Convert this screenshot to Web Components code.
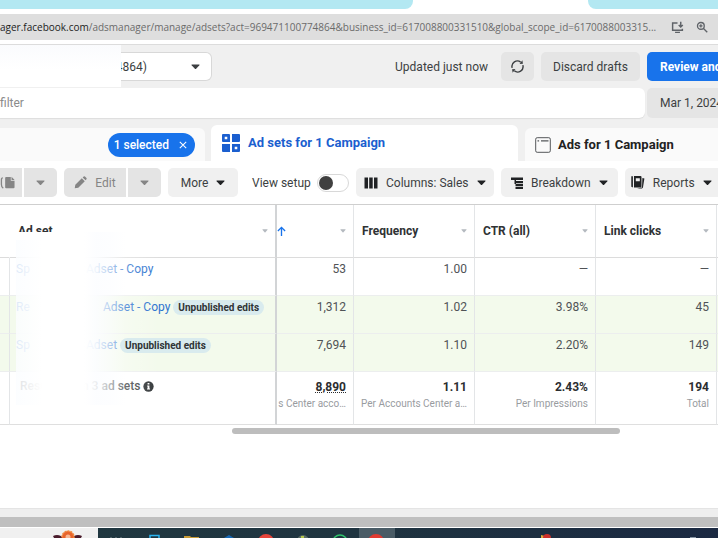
<!DOCTYPE html>
<html lang="en">
<head>
<meta charset="utf-8">
<title>Ads Manager</title>
<style>
  body {
    margin: 0;
    overflow: hidden;
    background: #ffffff;
    color: #3c3f42;
    font: 12px/16px Roboto, "Liberation Sans", sans-serif;
  }
</style>
</head>
<body>
<ads-page></ads-page>

<script>
const icons = {
  caret: ["0 0 10 6", `<path d="M1 .5h8q.8 0 .3.8L5.700 5.300q-.7.7-1.400 0L.7 1.300Q.2.5 1 .5z"/>`],
  refresh: ["0 0 16 16", `<g fill="none" stroke="currentColor" stroke-width="1.500"><path d="M2.300 9.500A5.800 5.800 0 0 1 11.500 3.400"/><path d="M13.700 6.500A5.800 5.800 0 0 1 4.500 12.600"/></g><path d="M10.200 5.300l3.600-.3-.6-3.600zM5.800 10.700l-3.600.3.600 3.600z"/>`],
  install: ["0 0 16 16", `<g fill="none" stroke="currentColor" stroke-width="1.800"><path d="M8 2.500H2v9h12V9.500"/><path d="M5 14h6M12 1v6M9.500 4.800L12 7.300l2.500-2.500"/></g>`],
  zoom: ["0 0 16 16", `<g fill="none" stroke="currentColor" stroke-width="1.800"><circle cx="6.500" cy="6.500" r="4.500"/><path d="M10 10l5 5M4.300 6.500h4.400M6.500 4.300v4.400"/></g>`],
  close: ["0 0 10 10", `<path d="M1 1l8 8M9 1L1 9" fill="none" stroke="currentColor" stroke-width="1.300"/>`],
  adsets: ["0 0 20 20", `<path fill-rule="evenodd" d="M2 1H8q1 0 1 1v7H2Q1 9 1 8V2Q1 1 2 1zM3.700 3.700v2.600h2.600V3.700zM11 1h7q1 0 1 1v6q0 1-1 1h-7zM1 11h8v8H2q-1 0-1-1zM11 11h8v7q0 1-1 1h-7zM13.700 13.700v2.600h2.600v-2.600z"/>`],
  ads: ["0 0 16 16", `<rect x=".7" y=".7" width="14.600" height="14.600" rx="1.500" fill="none" stroke="currentColor" stroke-width="1"/><path d="M2.500 3.200h1.600v1.400H2.500zM6 3.200h7.500v1.200H6z"/>`],
  copy: ["0 0 16 14", `<path d="M6.500 1h5v4h4v7q0 1-1 1h-8q-1 0-1-1V2q0-1 1-1zM12.300.8l3.300 3.400h-3.300z"/><path d="M3 2Q1.500 2 1.500 4v5q0 3 2 4" fill="none" stroke="currentColor" stroke-width="1.400"/>`],
  pencil: ["0 0 14 14", `<path d="M.8 13.200l.6-3.800 7-7 3.200 3.200-7 7zM9.300 1.500L10.500.6q.7-.5 1.300 0l1.600 1.600q.6.600 0 1.300l-.9 1.200z"/>`],
  columns: ["0 0 14 12", `<path d="M.5.5h3.500v11H.5zM5.200.5h3.500v11H5.200zM10 .5h3.500v11H10z"/>`],
  breakdown: ["0 0 12 12", `<path d="M0 .5h12v2.600H0zM3.500 4H12v2.200H3.500zM4.500 7H12v2H4.500zM4.500 9.800H12V12H4.500zM3.500 3h1.500v4H3.500z"/>`],
  reports: ["0 0 14 13", `<path fill-rule="evenodd" d="M3 0h6.500q1 0 1 1v9.500q0 1-1 1H3zM4.800 2.300v3h4v-3z"/><path d="M.3.300h1.600v11H1.300q-1 0-1-1zM11.400 2l2 .6-1.400 8.600q-.2 1-1.200 1.200H6l5-1z"/>`],
  sort: ["0 0 10 12", `<path d="M5 12V1.500M1 5.500l4-4 4 4" fill="none" stroke="currentColor" stroke-width="1.500"/>`],
  info: ["0 0 12 12", `<circle cx="6" cy="6" r="5.600"/><path fill="#fff" d="M5 2.300h2v1.500H5zM4.500 4.800H7v3.400h.7v1.200H4.400V8.200H5V6h-.5z"/>`]
};

class AdsIcon extends HTMLElement {
  constructor() {
    super();
    this.attachShadow({ mode: "open" });
  }

  connectedCallback() {
    const [box, shape] = icons[this.getAttribute("name")];
    const width = this.getAttribute("width") || 12;
    this.shadowRoot.innerHTML = `
      <style>
        :host { display: inline-flex; flex: none; }
        svg { display: block; width: ${width}px; fill: currentColor; }
      </style>
      <svg viewBox="${box}" aria-hidden="true">${shape}</svg>`;
  }
}
customElements.define("ads-icon", AdsIcon);

// Creates a custom element whose shadow root is cloned from fixed markup
function define(name, html) {
  const template = document.createElement("template");
  template.innerHTML = html;
  customElements.define(name, class extends HTMLElement {
    constructor() {
      super();
      this.attachShadow({ mode: "open" });
      this.shadowRoot.appendChild(template.content.cloneNode(true));
    }
  });
}

define("ads-button", `
  <style>
    :host { display: block; flex: none; }
    button {
      display: flex; align-items: center; justify-content: var(--justify, center); gap: 8px;
      box-sizing: border-box; width: 100%; height: var(--height, 29px); margin: 0;
      padding: 0 var(--pad, 10px);
      border: 0; border-radius: var(--radius, 5px);
      background: var(--bg, #f0f0f0); color: inherit;
      font: inherit; white-space: nowrap; overflow: hidden;
    }
  </style>
  <button type="button"><slot></slot></button>
`);

define("browser-chrome", `
  <style>
    :host { display: block; background: #fff; border-bottom: 1px solid #dcdcdc; padding-bottom: 4px; }
    .tabs { display: flex; justify-content: space-between; height: 9px; margin-bottom: 5px; }
    .tab { background: #b3e8f2; }
    .first { flex: 0 0 413px; border-bottom-right-radius: 8px; }
    .last { flex: 0 0 130px; border-bottom-left-radius: 8px; }
    .bar {
      display: flex; align-items: center; height: 26px; padding-right: 10px;
      background: #dedede; color: #5f6368;
    }
    .url {
      flex: 1; white-space: nowrap; overflow: hidden;
      font: 10px/16px "Open Sans", "Noto Sans", sans-serif; color: #6b6b6b;
    }
    b { font-weight: 400; color: #222; }
    .bar ads-icon + ads-icon { margin-left: 12px; }
  </style>
  <div class="tabs"><div class="tab first"></div><div class="tab last"></div></div>
  <div class="bar">
    <div class="url"><b>ager.facebook.com</b>/adsmanager/manage/adsets?act=969471100774864&amp;business_id=617008800331510&amp;global_scope_id=6170088003315...</div>
    <ads-icon name="install" width="13"></ads-icon>
    <ads-icon name="zoom" width="12"></ads-icon>
  </div>
`);

define("account-bar", `
  <style>
    :host { display: grid; gap: 7px; padding: 7px 0; background: #f0f0f0; }
    .row { display: flex; align-items: center; }
    .account { position: relative; flex: 0 0 212px; }
    select {
      display: block; appearance: none; box-sizing: border-box; width: 100%; height: 29px;
      padding: 0 64px 0 0; border: 1px solid #d8d8d8; border-left: 0;
      border-radius: 0 6px 6px 0; background: #fff;
      color: inherit; font: inherit; text-align: right; text-align-last: right;
    }
    .account ads-icon { position: absolute; right: 12px; top: 12px; }
    .mask {
      position: absolute; left: 0; top: -7px; width: 121px; height: 42px;
      background: linear-gradient(#fafbfd, #ffffff 60%);
    }
    .status { margin-left: auto; margin-right: 13px; }
    .refresh { width: 33px; --pad: 0; --bg: #e5e5e5; margin-right: 7px; }
    .discard { width: 99px; --pad: 0; --bg: #e5e5e5; margin-right: 7px; }
    .review, .date { width: 71px; --pad: 13px; --justify: flex-start; --radius: 5px 0 0 5px; }
    .review { --bg: #1873eb; color: #fff; font-weight: 700; }
    input {
      flex: 1; min-width: 0; box-sizing: border-box; height: 30px; padding: 0;
      border: 0; border-radius: 0 6px 6px 0; background: #fff; font: inherit;
      box-shadow: 0 1px 1px #dddddd;
    }
    input::placeholder { color: #8b8b8b; opacity: 1; }
    .date { margin-left: 2px; --bg: #e5e5e5; --height: 30px; }
  </style>
  <div class="row">
    <div class="account">
      <select aria-label="Ad account"><option>(969471100774864)</option></select>
      <ads-icon name="caret" width="9"></ads-icon>
      <div class="mask"></div>
    </div>
    <span class="status">Updated just now</span>
    <ads-button class="refresh"><ads-icon name="refresh" width="15"></ads-icon></ads-button>
    <ads-button class="discard">Discard drafts</ads-button>
    <ads-button class="review">Review and</ads-button>
  </div>
  <div class="row">
    <input type="search" placeholder="filter" aria-label="Search and filter">
    <ads-button class="date">Mar 1, 2024</ads-button>
  </div>
`);

define("level-tabs", `
  <style>
    :host { display: flex; align-items: flex-end; background: #f0f0f0; }
    a {
      display: flex; align-items: center; gap: 7px; box-sizing: border-box; height: 33px;
      background: #fafafa; color: #222; text-decoration: none;
      font: 700 13px/20px Roboto, "Liberation Sans", sans-serif;
    }
    .campaigns { flex: 0 0 205px; justify-content: flex-end; padding-right: 10px; border-radius: 0 6px 0 0; }
    .adsets { flex: 1; height: 36px; margin: 0 7px 0 6px; padding-left: 10px; border-radius: 6px 6px 0 0; background: #fff; color: #1b5fcf; }
    .ads { flex: 0 0 193px; padding-left: 10px; border-radius: 6px 0 0 0; }
    .ads ads-icon { color: #55585b; }
    .chip {
      display: flex; align-items: center; gap: 10px; height: 24px; padding: 0 8px 0 6px;
      border-radius: 12px; background: #1873eb; color: #fff; font: 500 12px/16px Roboto, sans-serif;
    }
  </style>
  <a class="campaigns" href="#campaigns"><span class="chip">1 selected <ads-icon name="close" width="8"></ads-icon></span></a>
  <a class="adsets" href="#adsets"><ads-icon name="adsets" width="20"></ads-icon>Ad sets for 1 Campaign</a>
  <a class="ads" href="#ads"><ads-icon name="ads" width="16"></ads-icon>Ads for 1 Campaign</a>
`);

define("ads-toolbar", `
  <style>
    :host { display: flex; align-items: center; gap: 7px; padding: 7px 0; background: #fff; white-space: nowrap; overflow: hidden; }
    .split { display: flex; gap: 2px; color: #858585; --bg: #e4e4e4; --pad: 0; }
    .split .main { --radius: 5px 0 0 5px; width: 62px; }
    .split .copy { --radius: 0; width: 22px; }
    .copy ads-icon { margin-right: 8px; }
    .split .more { --radius: 0 5px 5px 0; width: 33px; }
    label { display: flex; align-items: center; gap: 6px; margin-left: 7px; }
    input {
      appearance: none; box-sizing: border-box;
      width: 32px; height: 18px; margin: 0; border: 1px solid #d8d8d8; border-radius: 9px; background: #fff;
    }
    input::before {
      content: ""; display: block; width: 14px; height: 14px; margin: 1px;
      border-radius: 50%; background: #404040;
    }
    .menu ads-icon { color: #202224; }
    .more-menu { width: 70px; }
    .columns { width: 138px; }
    .breakdown { width: 117px; }
    .reports { width: 93px; --radius: 5px 0 0 5px; --pad: 6px; }
  </style>
  <div class="split">
    <ads-button class="copy"><ads-icon name="copy" width="15"></ads-icon></ads-button>
    <ads-button class="more"><ads-icon name="caret" width="9"></ads-icon></ads-button>
  </div>
  <div class="split">
    <ads-button class="main"><ads-icon name="pencil" width="13"></ads-icon>Edit</ads-button>
    <ads-button class="more"><ads-icon name="caret" width="9"></ads-icon></ads-button>
  </div>
  <ads-button class="menu more-menu">More <ads-icon name="caret" width="9"></ads-icon></ads-button>
  <label>View setup <input type="checkbox" role="switch"></label>
  <ads-button class="menu columns"><ads-icon name="columns" width="14"></ads-icon>Columns: Sales <ads-icon name="caret" width="9"></ads-icon></ads-button>
  <ads-button class="menu breakdown"><ads-icon name="breakdown" width="12"></ads-icon>Breakdown <ads-icon name="caret" width="9"></ads-icon></ads-button>
  <ads-button class="menu reports"><ads-icon name="reports" width="14"></ads-icon>Reports <ads-icon name="caret" width="9"></ads-icon></ads-button>
`);

const rows = [
  { start: "Sp", name: "Adset - Copy", values: ["53", "1.00", "—", "—"] },
  { start: "Re", name: "Adset - Copy", wide: true, edited: true, values: ["1,312", "1.02", "3.98%", "45"] },
  { start: "Sp", name: "Adset", edited: true, values: ["7,694", "1.10", "2.20%", "149"] }
];

class AdsetTable extends HTMLElement {
  constructor() {
    super();
    this.attachShadow({ mode: "open" });
  }

  connectedCallback() {
    this.shadowRoot.innerHTML = `
      <style>
        :host { display: block; position: relative; background: #fff; }
        table { width: 100%; table-layout: fixed; border-collapse: separate; border-spacing: 0; border-top: 1px solid #cfcfcf; }
        th, td {
          box-sizing: border-box; padding: 0 7px 0 8px; border-right: 1px solid #e3e5e7;
          border-bottom: 1px solid #eceeee; text-align: right; white-space: nowrap; overflow: hidden;
          font-weight: 400;
        }
        thead th { height: 53px; border-bottom-color: #dcdcdc; text-align: left; font-weight: 700; color: #2f3234; }
        thead th:first-child { border-right-color: #fff; }
        .head { display: flex; align-items: center; justify-content: space-between; }
        .head .caret { color: #b4b9bf; }
        .sorted { padding-left: 0; color: #1873eb; }
        tbody td, tbody th { height: 38px; padding-top: 2px; vertical-align: top; line-height: 18px; color: #505356; }
        .edited td, .edited th { background: #f3faec; }
        tbody .name, thead .name { text-align: left; border-right: 2px solid #d2d4d6; }
        tbody .name { padding-left: 6px; }
        a { color: #2d73cf; text-decoration: none; }
        .start { display: inline-block; width: 70px; }
        .wide { width: 87px; }
        .pill {
          position: relative; z-index: 2; display: inline-block; padding: 0 5px; border-radius: 8px;
          background: #d9ebee; color: #303436; font: 700 10px/15px Roboto, sans-serif;
        }
        tfoot td, tfoot th { height: 53px; padding-top: 6px; vertical-align: top; border-bottom-color: #dfdfdf; }
        tfoot .name { padding-left: 10px; text-align: left; border-right: 2px solid #d2d4d6; font-weight: 500; }
        tfoot ads-icon { vertical-align: -2px; color: #303436; }
        tfoot b { display: block; line-height: 18px; color: #2b2d2f; }
        .dots b { text-decoration: underline dotted; }
        small { display: flex; justify-content: flex-end; font-size: 10px; line-height: 16px; color: #999c9f; }
        .dots { padding-left: 0; }
        thead th:last-child, tbody td:last-child, tfoot td:last-child { border-right: 0; padding: 0; }
        .blur {
          position: absolute; left: 16px; top: 28px; width: 144px; height: 173px; z-index: 1;
          background: linear-gradient(90deg, rgba(251,253,255,.85), #fff 26px, #fff 68px, rgba(252,253,255,.92) 80px, rgba(252,253,255,.65) 94px, rgba(255,255,255,.25) 110px, rgba(255,255,255,0));
        }
        .blur::before { content: ""; display: block; width: 40px; height: 8px; background: #fff; }
        .scroll { width: 54%; height: 6px; margin: 3px 0 0 232px; border-radius: 3px; background: #bdbdbd; }
      </style>
      <table>
        <colgroup>
          <col style="width: 10px"><col><col style="width: 77px">
          <col style="width: 121px"><col style="width: 121px"><col style="width: 121px"><col style="width: 1px">
        </colgroup>
        <thead>
          <tr>
            <th></th>
            ${this.header("Ad set", "name")}
            <th class="sorted"><div class="head"><ads-icon name="sort" width="9"></ads-icon><ads-icon class="caret" name="caret" width="6"></ads-icon></div></th>
            ${["Frequency", "CTR (all)", "Link clicks"].map((t) => this.header(t, "")).join("")}
            <th></th>
          </tr>
        </thead>
        <tbody>${rows.map((row) => this.row(row)).join("")}</tbody>
        <tfoot>
          <tr>
            <td></td>
            <th class="name">Results from 3 ad sets <ads-icon name="info" width="11"></ads-icon></th>
            <td class="dots"><b>8,890</b><small>s Center acco…</small></td>
            <td><b>1.11</b><small>Per Accounts Center a…</small></td>
            <td><b>2.43%</b><small>Per Impressions</small></td>
            <td><b>194</b><small>Total</small></td>
            <td></td>
          </tr>
        </tfoot>
      </table>
      <div class="blur"></div>
      <div class="scroll"></div>`;
  }

  header(text, cls) {
    return `<th class="${cls}"><div class="head">${text}<ads-icon class="caret" name="caret" width="6"></ads-icon></div></th>`;
  }

  row({ start, name, wide, edited, values }) {
    return `
      <tr class="${edited ? "edited" : ""}">
        <td></td>
        <th class="name"><a href="#adset"><span class="start ${wide ? "wide" : ""}">${start}</span>${name}</a>
          ${edited ? `<span class="pill">Unpublished edits</span>` : ""}</th>
        ${values.map((value) => `<td>${value}</td>`).join("")}
        <td></td>
      </tr>`;
  }
}
customElements.define("adset-table", AdsetTable);

define("task-bar", `
  <style>
    :host { display: block; border-top: 1px solid #e4e4e4; }
    .status { height: 8px; background: #eeeeee; }
    .edge { height: 10px; background: #bfbfbf; border-bottom: 1px solid #fff; }
    .bar { display: flex; height: 10px; background: linear-gradient(90deg, #203840, #1f3440 50%, #1b2942); }
    .search { flex: 0 0 98px; background: #f0f0f0; }
    svg { display: block; flex: none; }
  </style>
  <div class="status"></div>
  <div class="edge"></div>
  <div class="bar">
    <div class="search">
      <svg width="98" height="10" viewBox="0 0 98 10">
        <path d="M53 8q4-2 8 0l2 2H54zM82 8q-4-2-8 0l-2 2h9z" fill="#4a1c2c"/>
        <circle cx="68" cy="9" r="6" fill="#e8642b" stroke="#f08a3c" stroke-width="1.500" stroke-dasharray="2 1"/>
        <circle cx="68" cy="9" r="2.500" fill="#f6b894"/>
      </svg>
    </div>
    <svg width="620" height="10" viewBox="98 0 620 10">
      <path d="M359 0h36v10h-36z" fill="#4a5c66"/>
      <path d="M110 9h2v1h-2zM115 9h2v1h-2zM120 9h2v1h-2z" fill="#4f626a"/>
      <path d="M150 10V7.500h9V10" fill="none" stroke="#2bb5f0" stroke-width="1.500"/>
      <path d="M184 8h6l1 1h8v1h-15z" fill="#c69a35"/>
      <path d="M224 10l5-3 5 3z" fill="#1769b5"/>
      <circle cx="266" cy="14" r="8" fill="#e6443a"/>
      <circle cx="303" cy="13" r="6" fill="#596b65"/><path d="M301 8h3v2h-3z" fill="#b5c74b"/>
      <circle cx="340" cy="14" r="7" fill="none" stroke="#30c26b" stroke-width="1.500"/>
      <circle cx="376" cy="14" r="8" fill="#e03b32"/>
      <path d="M541 7l4 1v2h-4z" fill="#e0a93a"/><circle cx="547" cy="10" r="4" fill="#cc2f2b"/>
      <path d="M690 9h6v1h-6z" fill="#8795a5"/>
    </svg>
  </div>
`);

define("ads-page", `
  <style>
    :host { display: flex; flex-direction: column; height: 100vh; overflow: hidden; }
    adset-table { flex: 1; }
  </style>
  <browser-chrome></browser-chrome>
  <account-bar></account-bar>
  <level-tabs></level-tabs>
  <ads-toolbar></ads-toolbar>
  <adset-table></adset-table>
  <task-bar></task-bar>
`);
</script>
</body>
</html>
